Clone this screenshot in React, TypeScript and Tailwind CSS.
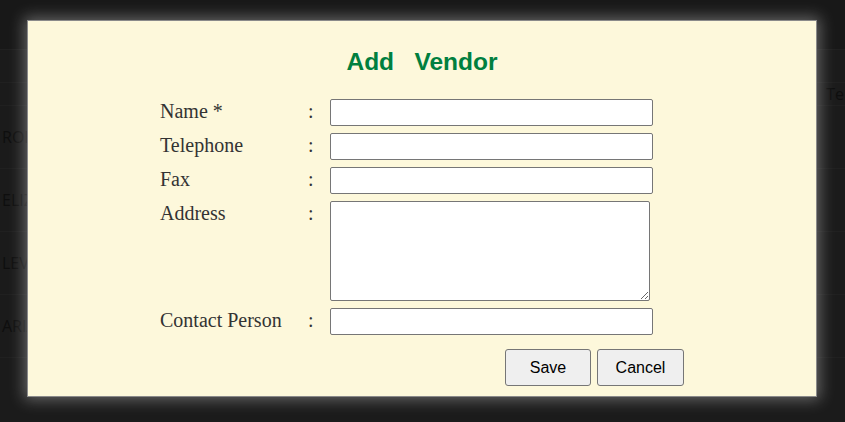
import React from "react";

const rows = ["ROBERT", "ELIZA", "LEVI", "ARIANA"];

export default function App() {
  const label = "text-[20px] leading-[24px] text-[#333]";
  const serif = { fontFamily: '"Liberation Serif", "Times New Roman", serif' };
  const inputCls =
    "h-[27px] w-[323px] border border-[#767676] rounded-[2px] bg-white outline-none";
  return (
    <div
      className="relative h-[422px] w-[845px] overflow-hidden bg-[#1b1b1b]"
      style={{ fontFamily: '"Open Sans", "Liberation Sans", sans-serif' }}
    >
      {/* dimmed page behind the dialog */}
      <div className="flex flex-col text-[16px] text-[#0e0e0e]">
        <div className="h-[50px] border-b border-[#202020] bg-[#181818]" />
        <div className="h-[33px] border-b border-[#202020]" />
        <div className="flex h-[23px] items-center justify-end border-b border-[#202020] pr-[1px]">
          <span>Te</span>
        </div>
        {rows.map((r) => (
          <div key={r} className="flex h-[63px] items-center border-b border-[#202020] pl-[2px]">
            {r}
          </div>
        ))}
      </div>

      {/* dialog */}
      <div className="absolute left-[27px] top-[20px] h-[377px] w-[790px] border border-[#8a8a8a] bg-[#fdf8db] shadow-[0_0_14px_3px_rgba(190,190,190,0.45)]">
        <h2
          className="whitespace-pre pt-[27px] text-center text-[24.5px] font-bold leading-[28px] text-[#007f3f]"
          style={{ fontFamily: '"Liberation Sans", Arial, sans-serif' }}
        >
          {"Add   Vendor"}
        </h2>
        <div
          className="ml-[132px] mt-[23px] grid grid-cols-[148px_22px_auto] gap-y-[7px]"
          style={serif}
        >
          <div className={label}>Name *</div>
          <div className={label}>:</div>
          <input className={inputCls} />

          <div className={label}>Telephone</div>
          <div className={label}>:</div>
          <input className={inputCls} />

          <div className={label}>Fax</div>
          <div className={label}>:</div>
          <input className={inputCls} />

          <div className={label}>Address</div>
          <div className={label}>:</div>
          <textarea className="block h-[100px] w-[320px] resize rounded-[2px] border border-[#767676] bg-white outline-none" />

          <div className={label}>Contact Person</div>
          <div className={label}>:</div>
          <input className={inputCls} />
        </div>
        <div
          className="mt-[14px] flex gap-[6px] pl-[477px] text-[16px] text-black"
          style={{ fontFamily: '"Liberation Sans", Arial, sans-serif' }}
        >
          <button className="h-[37px] w-[86px] rounded-[3px] border border-[#767676] bg-[#efefef]">
            Save
          </button>
          <button className="h-[37px] w-[87px] rounded-[3px] border border-[#767676] bg-[#efefef]">
            Cancel
          </button>
        </div>
      </div>
    </div>
  );
}
